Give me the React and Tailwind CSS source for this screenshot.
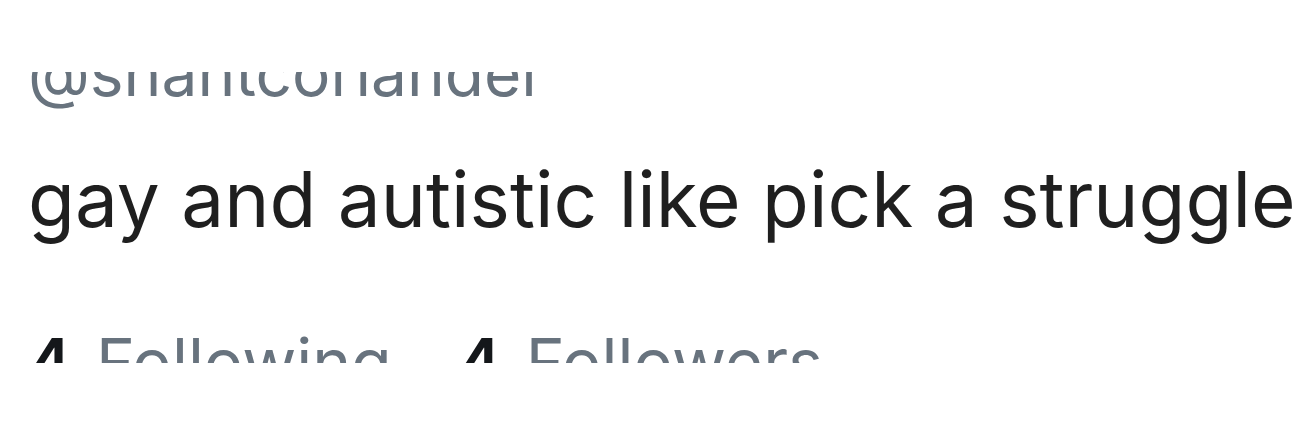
import React from 'react'

function Stat({ count, label }) {
    return (
        <span className="flex items-baseline gap-[24px]">
            <span className="font-semibold text-[#14171a]">{count}</span>
            <span className="text-[#68737e]">{label}</span>
        </span>
    )
}

export default function App() {
    return (
        <div className="h-[435px] w-full bg-white pt-[72px]" style={{ fontFamily: 'Inter, "Noto Sans", sans-serif' }}>
            <div className="h-[291px] overflow-hidden pl-[28px]">
                <p className="mt-[-31px] text-[64px] leading-none text-[#68737e]">@shantcoriander</p>
                <p className="mt-[56px] whitespace-nowrap text-[76.5px] leading-none text-[#1f1f1f]">
                    gay and autistic like pick a struggle
                </p>
                <div className="mt-[91px] flex gap-[66px] text-[66px] leading-none">
                    <Stat count="4" label="Following" />
                    <Stat count="4" label="Followers" />
                </div>
            </div>
        </div>
    )
}
